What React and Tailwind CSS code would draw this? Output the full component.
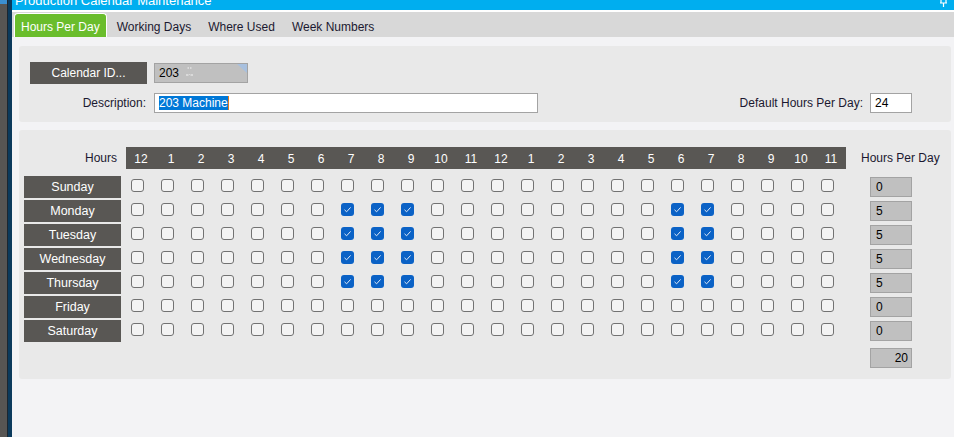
import React from "react";

const hours = ["12", "1", "2", "3", "4", "5", "6", "7", "8", "9", "10", "11", "12", "1", "2", "3", "4", "5", "6", "7", "8", "9", "10", "11"];
const workHours = [7, 8, 9, 18, 19];

const days = [
  { name: "Sunday", on: false },
  { name: "Monday", on: true },
  { name: "Tuesday", on: true },
  { name: "Wednesday", on: true },
  { name: "Thursday", on: true },
  { name: "Friday", on: false },
  { name: "Saturday", on: false },
];

function Check({ checked }) {
  if (checked) {
    return (
      <div className="flex h-[13px] w-[13px] items-center justify-center rounded-[3px] bg-[#0b62c6]">
        <svg width="9" height="9" viewBox="0 0 9 9" fill="none">
          <path d="M1.5 4.8 L3.6 6.8 L7.6 2.4" stroke="#dfe9f7" strokeWidth="1" />
        </svg>
      </div>
    );
  }
  return <div className="h-[13px] w-[13px] rounded-[3px] border border-[#727272] bg-[#f3f3f3]" />;
}

export default function App() {
  const rows = days.map((d) => ({
    ...d,
    cells: hours.map((_, i) => d.on && workHours.includes(i)),
  }));
  const total = rows.reduce((s, r) => s + r.cells.filter(Boolean).length, 0);

  return (
    <div className="flex h-[437px] w-[954px] overflow-hidden bg-[#f3f3f5] font-['Liberation_Sans',Arial,sans-serif] text-[12px] text-[#1b1830]">
      {/* left edge */}
      <div className="flex w-[12px] shrink-0">
        <div className="flex w-[7px] flex-col">
          <div className="h-[4px] bg-[#3b8fd0]" />
          <div className="flex-1 bg-[#575553]" />
        </div>
        <div className="w-px bg-[#1c2630]" />
        <div className="w-[4px] bg-[#0b3a5c]" />
      </div>

      <div className="flex min-w-0 flex-1 flex-col">
        {/* title bar, text clipped at the top like the window */}
        <div className="flex h-[10px] items-start justify-between overflow-hidden bg-[#00aeef] pl-[3px] pr-[6px]">
          <span className="-mt-[7px] text-[13px] leading-[15px] text-white">Production Calendar Maintenance</span>
          <svg width="9" height="7" viewBox="0 0 9 7">
            <path d="M2 0 V3 H7 V0 M1 3 H8 M4.5 3 V7" stroke="#fff" strokeWidth="1.2" fill="none" />
          </svg>
        </div>
        <div className="h-[2px] bg-white" />

        {/* tabs */}
        <div className="flex h-[25px] items-end gap-[3px] bg-[#d8d8d8] pl-[2px]">
          <div className="flex h-[24px] items-start rounded-t-[4px] border border-b-0 border-white bg-[#6abd2c] px-[6px] pt-[4px] text-white">
            Hours Per Day
          </div>
          {["Working Days", "Where Used", "Week Numbers"].map((t) => (
            <div key={t} className="flex h-[24px] items-start px-[7px] pt-[7px] leading-[14px]">
              {t}
            </div>
          ))}
        </div>

        {/* header panel */}
        <div className="relative ml-[7px] mr-[3px] mt-[9px] h-[76px] rounded-[3px] bg-[#e9e9e9] pl-[11px] pr-[39px] pt-[16px]">
          <div className="flex items-start gap-[7px]">
            <div className="flex h-[22px] w-[117px] items-center justify-center bg-[#595754] text-white">Calendar ID...</div>
            <div className="relative mt-px flex h-[20px] w-[94px] items-center overflow-hidden border border-[#a3a3a3] bg-[#c0c0c0] pl-[4px] text-black">
              203
              <div className="absolute right-0 top-0 h-0 w-0 border-l-[10px] border-t-[9px] border-l-transparent border-t-[#a8c0de]" />
              <svg width="9" height="16" viewBox="0 0 9 16" className="absolute left-[30px] top-[-4px]">
                <path d="M1 1 H3.5 M5.5 1 H8 M4.5 1.5 V14.5 M1 15 H3.5 M5.5 15 H8 M2.5 8 H6.5" stroke="#f4f4f4" strokeWidth="1" fill="none" />
                <path d="M4.5 2 V14" stroke="#9a9a9a" strokeWidth="0.6" fill="none" />
              </svg>
            </div>
          </div>
          <div className="mt-[9px] flex items-center">
            <div className="w-[117px] pr-px text-right">Description:</div>
            <div className="ml-[7px] flex h-[20px] w-[384px] items-center border border-[#a3a3a3] bg-white pl-[4px]">
              <span className="bg-[#0078d7] leading-[14px] text-white">203 Machine</span>
              <span className="h-[14px] w-px bg-[#e07a20]" />
            </div>
            <div className="flex-1" />
            <div>Default Hours Per Day:</div>
            <div className="ml-[7px] flex h-[20px] w-[42px] items-center border border-[#a3a3a3] bg-white pl-[4px] text-black">24</div>
          </div>
        </div>

        {/* hours grid panel */}
        <div className="ml-[7px] mr-[3px] mt-[8px] h-[249px] rounded-[3px] bg-[#e9e9e9] pl-[5px] pt-[17px]">
          <div className="flex h-[22px] items-center">
            <div className="w-[97px] pr-[4px] text-right">Hours</div>
            <div className="ml-[5px] flex h-[22px] w-[720px] items-center bg-[#595754] text-white">
              {hours.map((h, i) => (
                <div key={i} className="w-[30px] pt-px text-center">
                  {h}
                </div>
              ))}
            </div>
            <div className="ml-[15px] whitespace-nowrap">Hours Per Day</div>
          </div>

          <div className="mt-[7px] flex flex-col gap-[2px]">
            {rows.map((r) => (
              <div key={r.name} className="flex h-[22px] items-start">
                <div className="flex h-[22px] w-[97px] items-center justify-center bg-[#595754] text-[12.5px] text-white">{r.name}</div>
                <div className="ml-[5px] flex w-[720px]">
                  {r.cells.map((c, i) => (
                    <div key={i} className="w-[30px] pl-[5px] pt-[3px]">
                      <Check checked={c} />
                    </div>
                  ))}
                </div>
                <div className="ml-[24px] mt-px flex h-[20px] w-[42px] items-center border border-[#a3a3a3] bg-[#c0c0c0] pl-[5px] text-black">
                  {r.cells.filter(Boolean).length}
                </div>
              </div>
            ))}
          </div>

          <div className="ml-[846px] mt-[6px] flex h-[20px] w-[42px] items-center justify-end border border-[#a3a3a3] bg-[#c0c0c0] pr-[3px] text-black">
            {total}
          </div>
        </div>
      </div>
    </div>
  );
}
